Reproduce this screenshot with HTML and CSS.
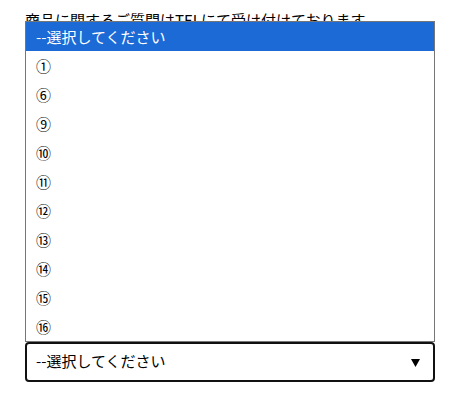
FILE: index.html
```html
<!DOCTYPE html>
<html lang="ja">
<head>
<meta charset="utf-8">
<title>お問い合わせ</title>
<link rel="stylesheet" href="styles.css">
</head>
<body>
<div class="page">
  <p class="notice">商品に関するご質問はTELにて受け付けております。</p>
  <div class="field">
    <div class="select">
      <span class="select-value">--選択してください</span>
      <svg class="select-arrow" width="9" height="8" viewBox="0 0 9 8"><polygon points="0,0 9,0 4.5,8" fill="#000"/></svg>
    </div>
    <ul class="dropdown">
      <li class="option selected">--選択してください</li>
      <li class="option">①</li>
      <li class="option">⑥</li>
      <li class="option">⑨</li>
      <li class="option">⑩</li>
      <li class="option">⑪</li>
      <li class="option">⑫</li>
      <li class="option">⑬</li>
      <li class="option">⑭</li>
      <li class="option">⑮</li>
      <li class="option">⑯</li>
    </ul>
  </div>
</div>
</body>
</html>
```
FILE: styles.css
```css
html, body {
  margin: 0;
  padding: 0;
  background: #fff;
}
body {
  font-family: "Noto Sans CJK JP", "Noto Sans", sans-serif;
  font-size: 15px;
  color: #000;
}
.page {
  width: 410px;
  padding: 9px 0 0 25px;
}
.notice {
  margin: 0;
  line-height: 22px;
  white-space: nowrap;
}
.field {
  position: relative;
  margin-top: 311px;
}
.select {
  box-sizing: border-box;
  height: 40px;
  border: 2px solid #111;
  border-radius: 4px;
  display: flex;
  align-items: center;
  justify-content: space-between;
  padding: 0 13px 0 9px;
  background: #fff;
}
.select-value {
  line-height: 20px;
  margin-top: -2px;
}
.select-arrow {
  display: block;
  margin-top: 1px;
}
.dropdown {
  position: absolute;
  left: 0;
  right: 0;
  bottom: 100%;
  margin: 0;
  padding: 0;
  list-style: none;
  border: 1px solid #767676;
  background: #fff;
}
.option {
  height: 29px;
  line-height: 29px;
  padding-left: 10px;
}
.option.selected {
  background: #1b6ad6;
  color: #fff;
}
```
